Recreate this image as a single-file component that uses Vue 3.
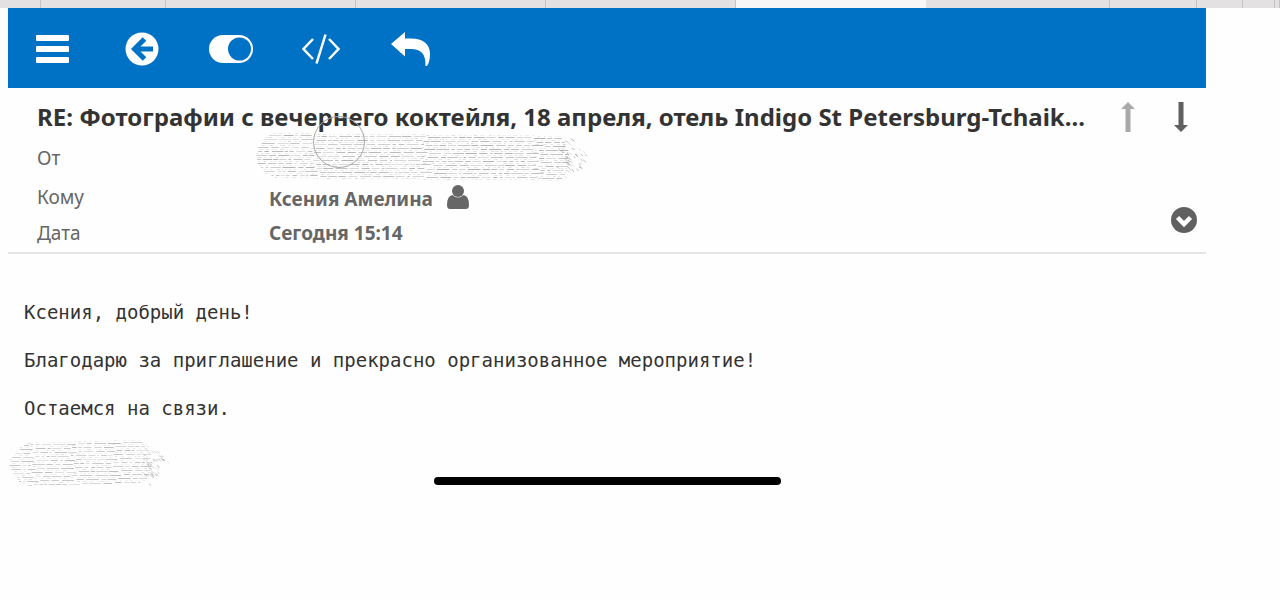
<script setup>
const tabs = [
  { grow: 41 }, { grow: 125 }, { grow: 190 }, { grow: 190 }, { grow: 190 },
  { grow: 190, active: true }, { grow: 184 }, { grow: 87 }, { grow: 46 }, { grow: 32 }, { grow: 5 },
]

// Repeatable pseudo-random strokes for the hidden names
function strokes(width, height, seed, slope) {
  let s = seed
  const rnd = () => {
    s = (s * 16807) % 2147483647
    return s / 2147483647
  }
  const out = []
  const rows = Math.floor(height / 2)
  for (let r = 0; r < rows; r++) {
    const t = (r + 0.5) / rows
    const bend = Math.sqrt(Math.max(0, 1 - (2 * t - 1) ** 2))
    const left = 26 * (1 - bend)
    const right = width - 20 - 14 * (1 - bend)
    const strong = r % 2 === 1
    let x = left + rnd() * 4
    while (x < right) {
      const len = strong ? 2 + rnd() * 11 : 1 + rnd() * 3
      const y = Math.round(1 + r * 2 + slope * (x / width)) + 0.5
      out.push({
        d: `M${x.toFixed(1)} ${y}h${Math.min(len, right - x).toFixed(1)}`,
        o: (strong ? 0.25 + rnd() * 0.4 : 0.08 + rnd() * 0.2).toFixed(2),
      })
      x += len + 1 + rnd() * (strong ? 2 : 4)
    }
  }
  for (let i = 0; i < height; i++) {
    const a = (rnd() - 0.5) * 2.6
    const k = 0.35 + rnd() * 0.65
    const x = width - 36 + Math.cos(a) * 33 * k
    const y = height / 2 + 2 + Math.sin(a) * (height / 2 - 1) * k
    out.push({ d: `M${x.toFixed(1)} ${y.toFixed(1)}l${(1 + rnd() * 3).toFixed(1)} ${(1 + rnd() * 2).toFixed(1)}`, o: (0.2 + rnd() * 0.45).toFixed(2) })
  }
  return out
}
const sender = strokes(334, 46, 71, 3)
const signature = strokes(163, 44, 37, -4)
</script>

<template>
  <div class="page">
    <div class="tabs" aria-hidden="true">
      <span v-for="(t, i) in tabs" :key="i" class="tab" :class="{ active: t.active }" :style="{ flexGrow: t.grow }"></span>
    </div>

    <main class="mail">
      <nav class="toolbar">
        <button class="tool" type="button" aria-label="Меню">
          <svg width="33" height="28" viewBox="0 0 33 28"><g fill="#fff"><rect width="33" height="6" rx="1" /><rect y="11" width="33" height="6" rx="1" /><rect y="22" width="33" height="6" rx="1" /></g></svg>
        </button>
        <button class="tool" type="button" aria-label="Назад">
          <svg width="34" height="34" viewBox="0 0 34 34"><circle cx="17" cy="17" r="16.500" fill="#fff" /><path d="M19.500 7L9.500 17L19.500 27M10 17H28" fill="none" stroke="#0072c6" stroke-width="5" /></svg>
        </button>
        <button class="tool" type="button" aria-label="Переключить">
          <svg width="44" height="28" viewBox="0 0 44 28"><rect width="44" height="28" rx="14" fill="#fff" /><circle cx="30.500" cy="14" r="11.500" fill="#0072c6" /></svg>
        </button>
        <button class="tool" type="button" aria-label="Исходный код">
          <svg width="40" height="30" viewBox="0 0 40 30"><path d="M12 5L2.500 15L12 25M28 5L37.500 15L28 25M24.500 .5L15.500 29.500" fill="none" stroke="#fff" stroke-width="2.500" /></svg>
        </button>
        <button class="tool" type="button" aria-label="Ответить">
          <svg width="40" height="36" viewBox="0 0 40 36"><path d="M0 13L14 1V7.500H20C32 7.500 39 13 39 23C39 28 38 32 36 35H34.500C35 23 30 18 20 18H14V25.500Z" fill="#fff" /></svg>
        </button>
      </nav>

      <header class="head">
        <div class="subject">
          <h1>RE: Фотографии с вечернего коктейля, 18 апреля, отель Indigo St Petersburg-Tchaik...</h1>
          <div class="arrows">
            <button type="button" aria-label="Предыдущее">
              <svg width="14" height="30" viewBox="0 0 14 30"><path d="M7 0L14 7H9.500V30H4.500V7H0Z" fill="#a9a9a9" /></svg>
            </button>
            <button type="button" aria-label="Следующее">
              <svg width="14" height="30" viewBox="0 0 14 30"><path d="M4.500 0H9.500V23H14L7 30L0 23H4.500Z" fill="#606060" /></svg>
            </button>
          </div>
        </div>

        <dl class="fields">
          <dt class="from">От</dt>
          <dd class="from">
            <svg class="veil" width="334" height="52" viewBox="0 0 334 52"><path v-for="(l, i) in sender" :key="i" :d="l.d" :stroke-opacity="l.o" stroke="#888" fill="none" /></svg>
            <span class="ring"></span>
          </dd>
          <dt>Кому</dt>
          <dd class="to">
            Ксения Амелина
            <svg class="person" width="22" height="24" viewBox="0 0 22 24"><circle cx="11" cy="6" r="6" fill="#666" /><path d="M5.500 10Q11 15 16.500 10Q22 11 22 20Q22 24 19 24H3Q0 24 0 20Q0 11 5.500 10Z" fill="#666" /></svg>
          </dd>
          <dt>Дата</dt>
          <dd>Сегодня 15:14</dd>
        </dl>
        <button class="more" type="button" aria-label="Подробнее">
          <svg width="26" height="26" viewBox="0 0 26 26"><circle cx="13" cy="13" r="13" fill="#606060" /><path d="M6.500 10.500L13 17L19.500 10.500" fill="none" stroke="#fff" stroke-width="4.500" /></svg>
        </button>
      </header>

      <article class="letter">
        <p>Ксения, добрый день!</p>
        <p>Благодарю за приглашение и прекрасно организованное мероприятие!</p>
        <p>Остаемся на связи.</p>
      </article>
      <svg class="signature" width="163" height="50" viewBox="0 -4 163 50"><path v-for="(l, i) in signature" :key="i" :d="l.d" :stroke-opacity="l.o" stroke="#999" fill="none" /></svg>
    </main>
    <div class="home"></div>
  </div>
</template>

<style>
body {
  margin: 0;
  background: #fefefe;
}
</style>

<style scoped>
.page {
  position: relative;
  font-family: "Noto Sans", "Open Sans", sans-serif;
  color: #666;
}
.tabs {
  display: flex;
  height: 8px;
}
.tab {
  flex: 1 1 0;
  min-width: 0;
  background: #e3e1e2;
  box-shadow: inset -1px 0 #c4c2c3;
}
.tab.active {
  background: #f7f7f7;
  box-shadow: none;
}
.mail {
  margin: 0 74px 0 8px;
}
button {
  padding: 0;
  border: 0;
  background: none;
  cursor: pointer;
}
svg {
  display: block;
}
.toolbar {
  display: flex;
  align-items: center;
  height: 80px;
  padding: 2px 0 0 28px;
  box-sizing: border-box;
  background: #0072c6;
}
.tool + .tool {
  margin-left: 50px;
}
.tool:nth-child(2) {
  margin-left: 56px;
}
.tool:nth-child(4) {
  margin-left: 48px;
}
.head {
  position: relative;
  border-bottom: 2px solid #e4e4e4;
  padding: 12px 18px 2px 29px;
}
.subject {
  display: flex;
  align-items: center;
  justify-content: space-between;
  height: 34px;
}
h1 {
  margin: 0;
  min-width: 0;
  overflow: hidden;
  white-space: nowrap;
  font-size: 24px;
  line-height: 34px;
  color: #333;
}
.arrows {
  display: flex;
  gap: 39px;
  flex: none;
}
.fields {
  display: grid;
  grid-template-columns: 232px 1fr;
  margin: 0;
  font-size: 19px;
  line-height: 34px;
}
dt,
dd {
  margin: 0;
}
dd {
  font-weight: 700;
}
.from {
  height: 46px;
  line-height: 48px;
  position: relative;
}
.to {
  display: flex;
  align-items: center;
  gap: 14px;
  padding-top: 2px;
}
.person {
  margin-bottom: 4px;
}
.veil {
  position: absolute;
  left: -14px;
  top: -2px;
}
.ring {
  position: absolute;
  left: 44px;
  top: -18px;
  width: 50px;
  height: 50px;
  border: 1px solid #aaa;
  border-radius: 50%;
}
.more {
  position: absolute;
  right: 9px;
  bottom: 19px;
}
.letter {
  padding: 46px 16px 0;
  font-family: "DejaVu Sans Mono", monospace;
  font-size: 19px;
  line-height: 24px;
  color: #333;
}
.letter p {
  margin: 0 0 24px;
}
.letter p:last-child {
  margin-bottom: 18px;
}
.signature {
  margin-left: 1px;
}
.home {
  position: absolute;
  top: 477px;
  left: 434px;
  right: 499px;
  height: 8px;
  border-radius: 4px;
  background: #000;
}
</style>
